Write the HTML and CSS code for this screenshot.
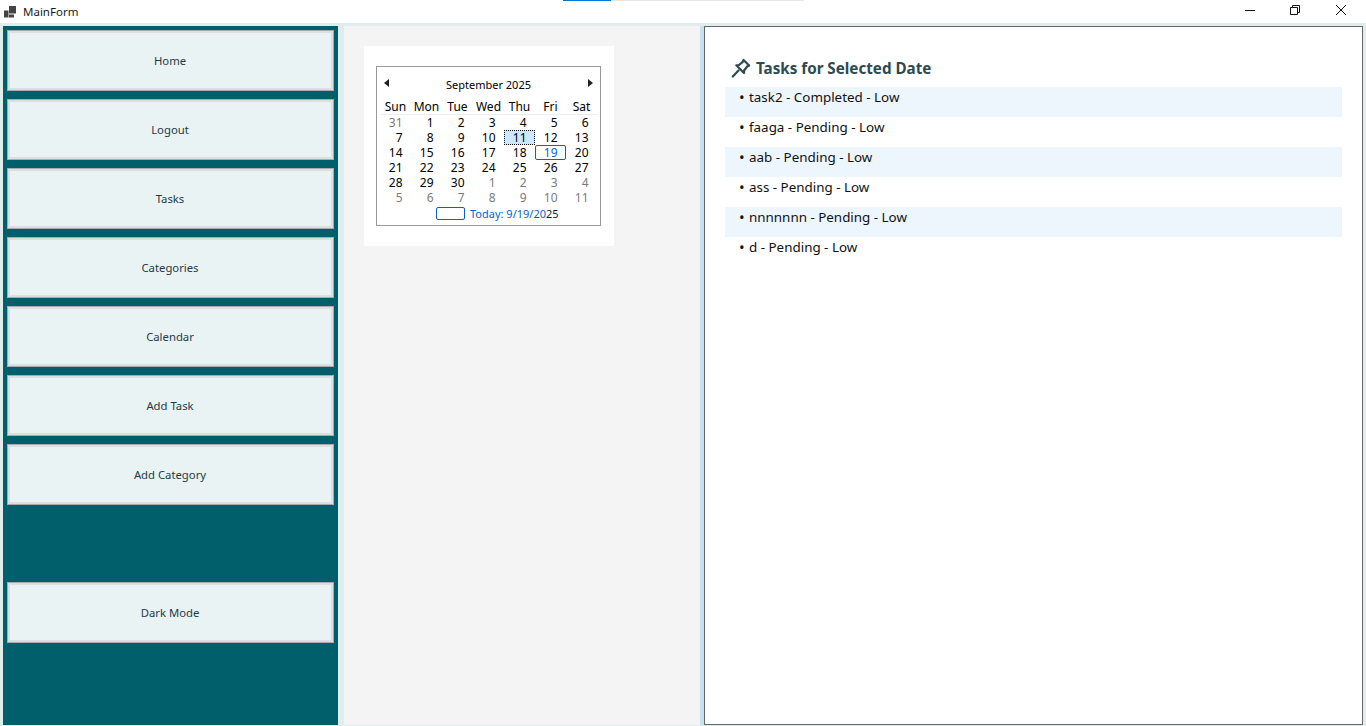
FILE: index.html
```html
<!DOCTYPE html>
<html lang="en">
<head>
<meta charset="utf-8">
<title>MainForm</title>
<link rel="stylesheet" href="styles.css">
</head>
<body>
<div class="window">
  <header class="titlebar">
    <div class="loader"><span class="loader-fill"></span></div>
    <div class="title-left">
      <svg class="app-icon" width="12" height="12" viewBox="0 0 12 12"><path fill="#444" d="M0 4.500h4.500v7H0zM5 0h7v7.500H5zM5 8.500h5v3H5z"/></svg>
      <span class="title-text">MainForm</span>
    </div>
    <div class="win-controls">
      <svg width="12" height="12" viewBox="0 0 12 12" class="wc wc-min"><path d="M1 6.500h10" stroke="#111" fill="none"/></svg>
      <svg width="12" height="12" viewBox="0 0 12 12" class="wc wc-res"><path d="M1.500 3.500h7v7h-7zM3.500 3.500v-2h7v7h-2" stroke="#111" fill="none"/></svg>
      <svg width="12" height="12" viewBox="0 0 12 12" class="wc wc-close"><path d="M1 1l10 10M11 1L1 11" stroke="#111" fill="none"/></svg>
    </div>
  </header>
  <main class="body">
    <nav class="sidebar">
      <button class="nav-btn">Home</button>
      <button class="nav-btn">Logout</button>
      <button class="nav-btn">Tasks</button>
      <button class="nav-btn">Categories</button>
      <button class="nav-btn">Calendar</button>
      <button class="nav-btn">Add Task</button>
      <button class="nav-btn">Add Category</button>
      <button class="nav-btn nav-btn-far">Dark Mode</button>
    </nav>
    <section class="center">
      <div class="cal-card">
        <div class="calendar">
          <div class="cal-head">
            <span class="arrow arrow-left"></span>
            <span class="cal-month">September 2025</span>
            <span class="arrow arrow-right"></span>
          </div>
          <div class="cal-dow">
            <span>Sun</span><span>Mon</span><span>Tue</span><span>Wed</span><span>Thu</span><span>Fri</span><span>Sat</span>
          </div>
          <div class="cal-days">
            <span class="muted">31</span><span>1</span><span>2</span><span>3</span><span>4</span><span>5</span><span>6</span>
            <span>7</span><span>8</span><span>9</span><span>10</span><span class="sel">11</span><span>12</span><span>13</span>
            <span>14</span><span>15</span><span>16</span><span>17</span><span>18</span><span class="today">19</span><span>20</span>
            <span>21</span><span>22</span><span>23</span><span>24</span><span>25</span><span>26</span><span>27</span>
            <span>28</span><span>29</span><span>30</span><span class="muted">1</span><span class="muted">2</span><span class="muted">3</span><span class="muted">4</span>
            <span class="muted">5</span><span class="muted">6</span><span class="muted">7</span><span class="muted">8</span><span class="muted">9</span><span class="muted">10</span><span class="muted">11</span>
          </div>
          <div class="cal-foot">
            <span class="today-box"></span>
            <span class="today-text">Today: 9/19/20<span class="today-end">25</span></span>
          </div>
        </div>
      </div>
    </section>
    <section class="panel">
      <h2 class="panel-title">
        <svg class="pin" width="20" height="20" viewBox="0 0 20 20"><g fill="none" stroke="#2c4a50" stroke-width="2.200" stroke-linejoin="round" stroke-linecap="round"><path d="M12.500 2L18.200 7.500 16.500 8.300 13.200 12.300 13 15 5.300 7.300 8 7 11.800 3.800z"/><path d="M7.500 12.500L1.800 18.500"/></g></svg>
        Tasks for Selected Date
      </h2>
      <ul class="tasks">
        <li>task2 - Completed - Low</li>
        <li>faaga - Pending - Low</li>
        <li>aab - Pending - Low</li>
        <li>ass - Pending - Low</li>
        <li>nnnnnnn - Pending - Low</li>
        <li>d - Pending - Low</li>
      </ul>
    </section>
  </main>
</div>
</body>
</html>
```

FILE: styles.css
```css
* { box-sizing: border-box; }
html, body { margin: 0; height: 100%; overflow: hidden; }
body { font-family: "Noto Sans", "Open Sans", sans-serif; background: #fff; color: #000; }
.window { display: flex; flex-direction: column; width: 1366px; height: 726px; }

.titlebar { position: relative; height: 23px; flex: none; background: #fff; display: flex; align-items: center; justify-content: space-between; }
.loader { position: absolute; left: 563px; top: 0; width: 241px; height: 1px; background: #e6e6e6; }
.loader-fill { display: block; width: 48px; height: 1px; background: #0078d7; }
.title-left { display: flex; align-items: center; padding-left: 4px; }
.app-icon { margin-right: 7px; }
.title-text { font-size: 11.500px; color: #1a1a1a; }
.win-controls { display: flex; }
.wc { display: block; margin-top: -3px; }
.wc-min { margin-right: 33px; }
.wc-res { margin-right: 34px; }
.wc-close { margin-right: 19px; }

.body { flex: 1; min-height: 0; display: flex; background: #dfeded; padding: 3px 3px 1px 3px; }
.sidebar { width: 335px; flex: none; background: #005f6b; padding: 4px 4px 0; display: flex; flex-direction: column; gap: 8px; }
.nav-btn { height: 61px; flex: none; background: #eaf3f4; border: 1px solid #aaa; box-shadow: inset 0 0 0 2px #dcdfdf; color: #1f3a44; font: 11.300px "Noto Sans", "Open Sans", sans-serif; padding: 0 1px 1px 0; }
.nav-btn-far { margin-top: 69px; }

.center { width: 356px; flex: none; margin-left: 6px; background: #f4f4f4; padding: 20px; }
.cal-card { width: 250px; height: 200px; background: #fff; padding: 20px 13px 20px 12px; }
.calendar { width: 225px; height: 160px; border: 1px solid #999; background: #fff; display: flex; flex-direction: column; padding: 0 3px 0 3px; font-size: 12px; color: #000; }
.cal-head { height: 32px; flex: none; display: flex; align-items: center; justify-content: space-between; padding: 3px 4px 0 4px; }
.cal-month { font-size: 11px; line-height: 16px; }
.arrow { width: 0; height: 0; margin-top: -3px; border-top: 4px solid transparent; border-bottom: 4px solid transparent; }
.arrow-left { border-right: 5px solid #222; }
.arrow-right { border-left: 5px solid #222; }
.cal-dow { display: grid; grid-template-columns: repeat(7, 31px); height: 16px; flex: none; line-height: 15px; text-align: center; border-bottom: 1px solid #eee; }
.cal-days { display: grid; grid-template-columns: repeat(7, 31px); grid-auto-rows: 15px; line-height: 15px; text-align: right; }
.cal-days span { padding-right: 8.500px; }
.cal-days .muted { color: #7b7b7b; }
.cal-days .sel { background: #cce8ff; outline: 1px dotted #111; outline-offset: -1px; }
.cal-days .today { color: #0a62c4; border: 1px solid #0a62c4; border-radius: 2px; padding-right: 7.500px; line-height: 13px; }
.cal-foot { display: flex; align-items: center; padding-left: 56px; margin-top: 1px; height: 15px; }
.today-box { width: 29px; height: 13px; border: 1px solid #0a62c4; border-radius: 2px; margin-right: 5px; }
.today-text { color: #0a62c4; font-size: 11px; line-height: 13px; margin-top: -1px; }
.today-end { color: #1a1a1a; }

.panel { flex: 1; margin-left: 4px; background: #fff; border: 1px solid #666; padding: 30px 20px 0 20px; box-shadow: -4px 0 0 #c5e3f3; }
.panel-title { margin: 0; padding: 0 0 8px 6px; display: flex; align-items: center; gap: 5px; height: 30px; font-size: 15.200px; font-weight: 700; color: #2c4a50; }
.tasks { list-style: none; margin: 0; padding: 0; }
.tasks li { height: 30px; padding: 0 0 0 24px; font-size: 13.400px; line-height: 20px; position: relative; color: #111; }
.tasks li::before { content: "•"; position: absolute; left: 14px; font-size: 15px; }
.tasks li:nth-child(odd) { background: #eef6fd; }
```
